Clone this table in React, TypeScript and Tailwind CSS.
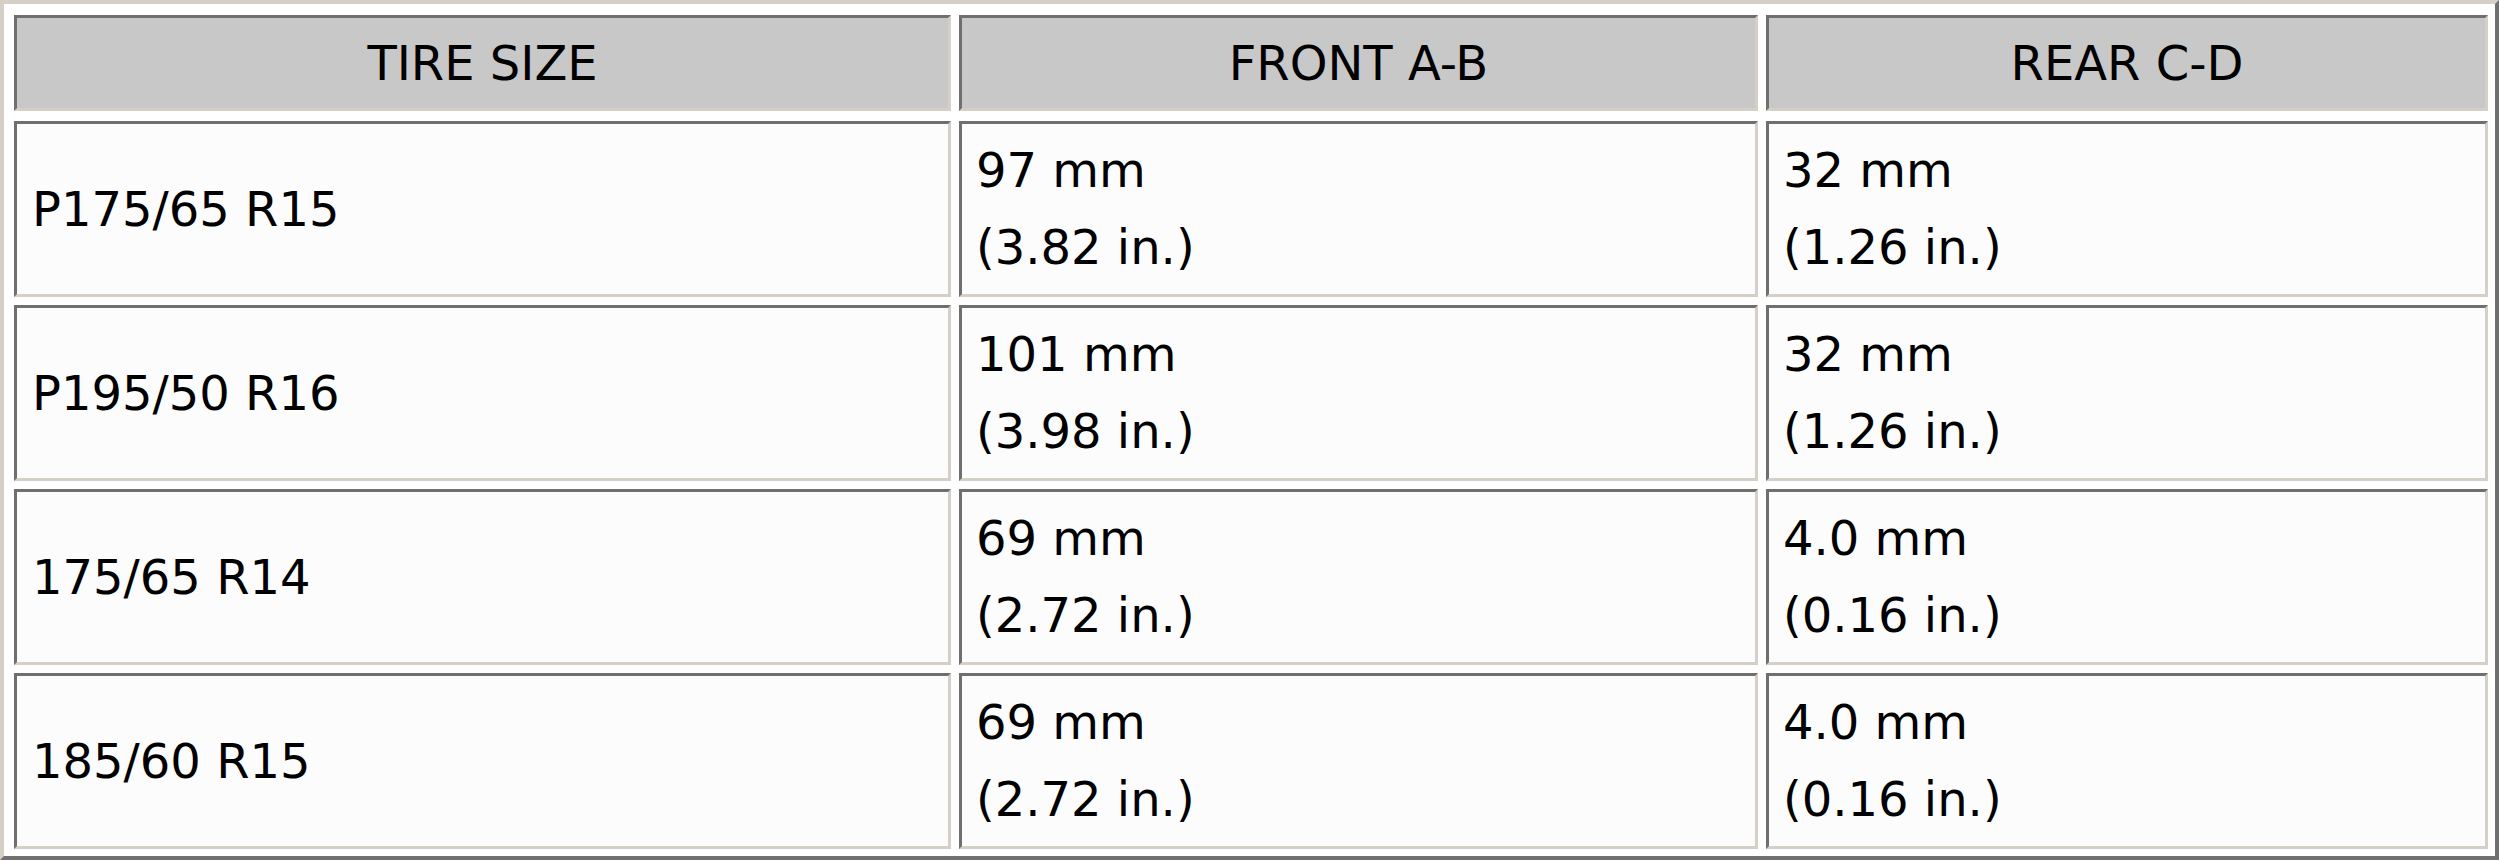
const HEADERS = ['TIRE SIZE', 'FRONT A-B', 'REAR C-D'];

const ROWS: [string, [string, string], [string, string]][] = [
  ['P175/65 R15', ['97 mm', '(3.82 in.)'], ['32 mm', '(1.26 in.)']],
  ['P195/50 R16', ['101 mm', '(3.98 in.)'], ['32 mm', '(1.26 in.)']],
  ['175/65 R14', ['69 mm', '(2.72 in.)'], ['4.0 mm', '(0.16 in.)']],
  ['185/60 R15', ['69 mm', '(2.72 in.)'], ['4.0 mm', '(0.16 in.)']],
];

// inset cell border, like an old border="1" table
const cell =
  'border-[3px] border-t-[#6f6f6f] border-l-[#6f6f6f] border-b-[#d4d0c8] border-r-[#d4d0c8]';

export default function App() {
  return (
    <div className="min-h-screen bg-white text-black" style={{ fontFamily: '"DejaVu Sans", Verdana, sans-serif' }}>
      <div className="w-[2499px] border-4 border-t-[#d4d0c8] border-l-[#d4d0c8] border-b-[#6f6f6f] border-r-[#6f6f6f] bg-white pt-[11px] pl-[10px] pr-[7px] pb-[7px]">
        {/* Header */}
        <div className="grid grid-cols-[937px_799px_722px] gap-x-[8px] mb-[10px]">
          {HEADERS.map((h) => (
            <div key={h} className={`${cell} h-[96px] bg-[#c8c8c8] flex items-center justify-center text-[48px] leading-none`}>
              {h}
            </div>
          ))}
        </div>

        {/* Body rows */}
        <div className="flex flex-col gap-y-[8px]">
          {ROWS.map(([size, front, rear]) => (
            <div key={size} className="grid grid-cols-[937px_799px_722px] gap-x-[8px]">
              <div className={`${cell} h-[176px] bg-[#fcfcfc] flex items-center pl-[15px] text-[48px] leading-[77px]`}>
                {size}
              </div>
              <div className={`${cell} h-[176px] bg-[#fcfcfc] flex flex-col justify-center pl-[14px] text-[48px] leading-[77px]`}>
                <span>{front[0]}</span>
                <span>{front[1]}</span>
              </div>
              <div className={`${cell} h-[176px] bg-[#fcfcfc] flex flex-col justify-center pl-[14px] text-[48px] leading-[77px]`}>
                <span>{rear[0]}</span>
                <span>{rear[1]}</span>
              </div>
            </div>
          ))}
        </div>
      </div>
    </div>
  );
}
